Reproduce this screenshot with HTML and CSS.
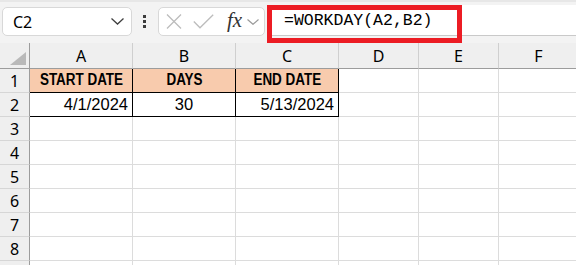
FILE: index.html
```html
<!DOCTYPE html>
<html lang="en">
<head>
  <meta charset="UTF-8">
  <title>WORKDAY</title>
  <link rel="stylesheet" href="styles.css">
</head>
<body>

<div class="toolbar">
  <div class="namebox">
    <span>C2</span>
    <svg width="13" height="7" viewBox="0 0 13 7"><polyline points="0.5,0.5 6.5,6 12.5,0.5" fill="none" stroke="#404040" stroke-width="1.3"/></svg>
  </div>
  <div class="dots"><span></span><span></span><span></span></div>
  <div class="fxbox">
    <svg class="ic-x" width="16" height="15" viewBox="0 0 16 15"><path d="M1 0.5 L15 14.5 M15 0.5 L1 14.5" stroke="#bcbcbc" stroke-width="1.3" fill="none"/></svg>
    <svg class="ic-ok" width="21" height="15" viewBox="0 0 21 15"><polyline points="0.8,7.5 7,13.8 20.2,0.8" fill="none" stroke="#bcbcbc" stroke-width="1.3"/></svg>
    <span class="fx">fx</span>
    <svg class="ic-down" width="12" height="6" viewBox="0 0 12 6"><polyline points="0.5,0.5 6,5.3 11.5,0.5" fill="none" stroke="#9a9a9a" stroke-width="1.2"/></svg>
  </div>
  <div class="formula">=WORKDAY(A2,B2)</div>
  <div class="highlight"></div>
</div>

<div class="sheet">
  <div class="corner"><span class="tri"></span></div>
  <div class="colhead">A</div>
  <div class="colhead">B</div>
  <div class="colhead">C</div>
  <div class="colhead">D</div>
  <div class="colhead">E</div>
  <div class="colhead">F</div>

  <div class="rowhead">1</div>
  <div class="cell head boxed"><span>START DATE</span></div>
  <div class="cell head boxed"><span>DAYS</span></div>
  <div class="cell head boxed"><span>END DATE</span></div>
  <div class="cell"></div>
  <div class="cell"></div>
  <div class="cell"></div>

  <div class="rowhead">2</div>
  <div class="cell num boxed">4/1/2024</div>
  <div class="cell mid boxed">30</div>
  <div class="cell num boxed">5/13/2024</div>
  <div class="cell"></div>
  <div class="cell"></div>
  <div class="cell"></div>

  <div class="rowhead">3</div>
  <div class="cell"></div><div class="cell"></div><div class="cell"></div><div class="cell"></div><div class="cell"></div><div class="cell"></div>
  <div class="rowhead">4</div>
  <div class="cell"></div><div class="cell"></div><div class="cell"></div><div class="cell"></div><div class="cell"></div><div class="cell"></div>
  <div class="rowhead">5</div>
  <div class="cell"></div><div class="cell"></div><div class="cell"></div><div class="cell"></div><div class="cell"></div><div class="cell"></div>
  <div class="rowhead">6</div>
  <div class="cell"></div><div class="cell"></div><div class="cell"></div><div class="cell"></div><div class="cell"></div><div class="cell"></div>
  <div class="rowhead">7</div>
  <div class="cell"></div><div class="cell"></div><div class="cell"></div><div class="cell"></div><div class="cell"></div><div class="cell"></div>
  <div class="rowhead">8</div>
  <div class="cell"></div><div class="cell"></div><div class="cell"></div><div class="cell"></div><div class="cell"></div><div class="cell"></div>
  <div class="rowhead"></div>
  <div class="cell"></div><div class="cell"></div><div class="cell"></div><div class="cell"></div><div class="cell"></div><div class="cell"></div>
</div>

</body>
</html>
```

FILE: styles.css
```css
* {
  box-sizing: border-box;
}
body {
  margin: 0;
  width: 576px;
  height: 265px;
  overflow: hidden;
  background: #fff;
  font-family: "Noto Sans", "Open Sans", sans-serif;
  color: #000;
}

/* formula bar area */
.toolbar {
  position: relative;
  height: 43px;
  display: flex;
  align-items: flex-start;
  background: #f3f3f3;
  border-top: 2px solid #e7e7e7;
}
.namebox {
  margin: 5px 0 0 2px;
  width: 130px;
  height: 29px;
  background: #fff;
  border: 1px solid #d8d8d8;
  border-radius: 5px;
  display: flex;
  align-items: center;
  justify-content: space-between;
  padding: 0 7px 0 10px;
  font-size: 16px;
}
.dots {
  margin: 13px 0 0 11px;
  display: flex;
  flex-direction: column;
  gap: 2px;
}
.dots span {
  width: 3px;
  height: 3px;
  background: #3c3c3c;
}
.fxbox {
  margin: 5px 0 0 12px;
  width: 107px;
  height: 29px;
  background: #fff;
  border: 1px solid #d8d8d8;
  border-radius: 5px;
  display: flex;
  align-items: center;
  padding-left: 7px;
}
.ic-ok {
  margin-left: 11px;
}
.fx {
  margin-left: 13px;
  font-family: "Liberation Serif", serif;
  font-style: italic;
  font-size: 21px;
  color: #333;
  line-height: 1;
  padding-bottom: 2px;
}
.ic-down {
  margin: 1px 0 0 5px;
}
.formula {
  margin: 3px 0 0 3px;
  flex: 1;
  height: 31px;
  background: #fff;
  border-bottom: 1px solid #c9c9c9;
  padding: 6px 0 0 16px;
  font-family: "Liberation Mono", monospace;
  font-size: 16.5px;
  line-height: 20px;
}
.highlight {
  position: absolute;
  left: 267px;
  top: 3px;
  width: 195px;
  height: 38px;
  border: 5px solid #ec1c24;
}

/* grid */
.sheet {
  display: grid;
  grid-template-columns: 30px 103px 103px 103px 80px 80px 80px;
  grid-template-rows: 26px;
  grid-auto-rows: 24px;
}
.corner, .colhead {
  background: #efefef;
  border-bottom: 1px solid #9c9c9c;
}
.corner {
  position: relative;
  border-right: 1px solid #9c9c9c;
}
.tri {
  position: absolute;
  right: 3px;
  bottom: 3px;
  width: 0;
  height: 0;
  border-left: 16px solid transparent;
  border-bottom: 13px solid #b9b9b9;
}
.colhead {
  border-right: 1px solid #cfcfcf;
  text-align: center;
  font-size: 16px;
  line-height: 24px;
  padding-top: 1px;
}
.rowhead {
  background: #efefef;
  border-right: 1px solid #9c9c9c;
  border-bottom: 1px solid #d6d6d6;
  text-align: center;
  font-size: 16px;
  line-height: 24px;
}
.cell {
  border-right: 1px solid #dcdcdc;
  border-bottom: 1px solid #dcdcdc;
  font-family: "Liberation Sans", Arial, sans-serif;
  font-size: 16.5px;
  display: flex;
  align-items: flex-end;
  padding: 0 4px 3px;
  line-height: 18px;
  white-space: nowrap;
}
.boxed {
  border-color: #000;
}
.head {
  background: #f8cbad;
  justify-content: center;
  font-weight: bold;
  font-size: 16px;
}
.head span {
  display: inline-block;
  transform: scaleX(0.84);
}
.num {
  justify-content: flex-end;
}
.mid {
  justify-content: center;
}
```
